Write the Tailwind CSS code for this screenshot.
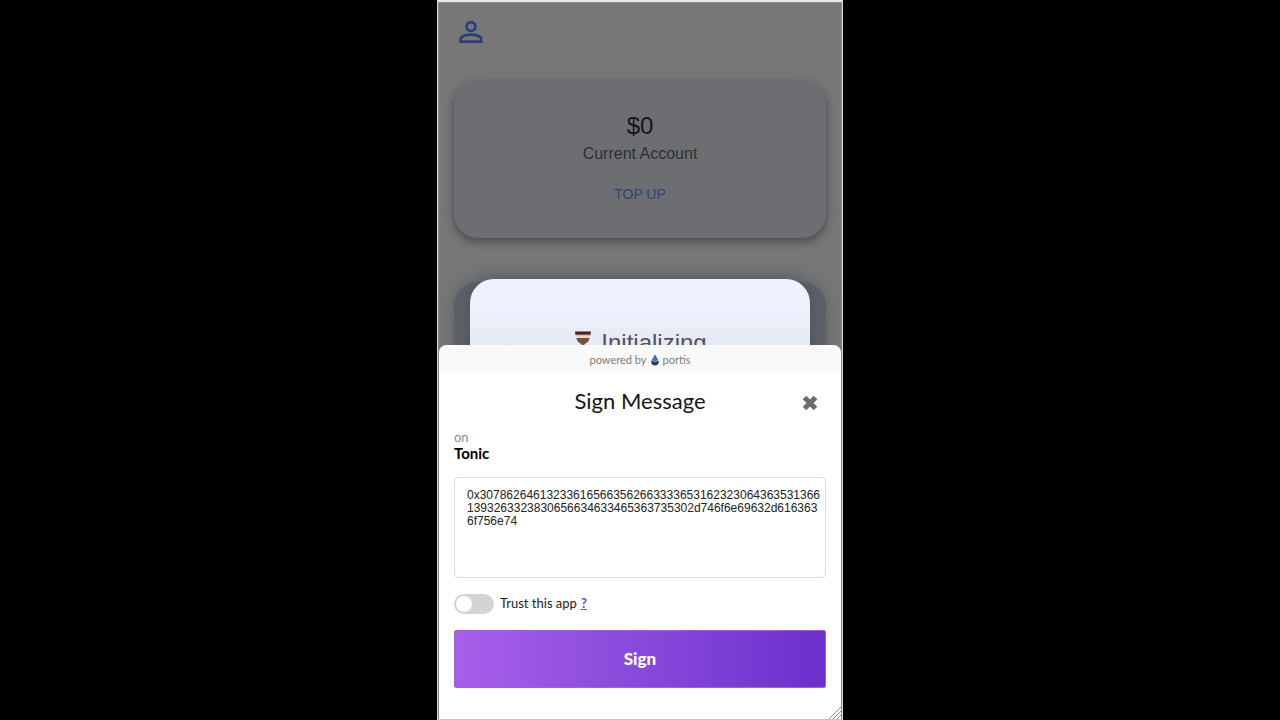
<!DOCTYPE html>
<html lang="en">
<head>
<meta charset="utf-8">
<meta name="viewport" content="width=device-width, initial-scale=1">
<title>Sign Message</title>
<script src="https://cdn.jsdelivr.net/npm/@tailwindcss/browser@4"></script>
</head>
<body class="flex min-h-screen justify-center bg-black font-['Liberation_Sans',Arial,sans-serif]">
  <div class="relative flex w-full max-w-[406px] flex-col overflow-hidden border-x border-t-2 border-b border-x-[#d8d8d8] border-t-[#e8e8e8] border-b-[#c4c4c4] bg-[#777777]">

    <!-- Wallet page -->
    <main class="flex flex-1 flex-col border border-b-0 border-[#8c8c8c] px-[15px] pt-[15px]">
      <a href="#" aria-label="Profile" class="ml-[3px] block w-7 text-[#2d3d78]">
        <svg viewBox="0 0 24 24" class="size-7" fill="none" stroke="currentColor" stroke-width="2.300">
          <circle cx="12" cy="7.300" r="3.800"/>
          <path d="M3.200 20.300v-2.100c0-2.500 4.800-3.900 8.800-3.900s8.800 1.400 8.800 3.900v2.100z"/>
        </svg>
      </a>
      <section class="mt-9 flex flex-col items-center rounded-3xl bg-[#6d6e72] pt-7 pb-7 shadow-[0_4px_8px_rgba(0,0,0,0.35),0_-2px_12px_rgba(109,110,114,0.9)]">
        <h2 class="text-2xl leading-8 text-[#171717]">$0</h2>
        <p class="text-base text-[#2e2f31]">Current Account</p>
        <button type="button" class="mt-3 h-8 text-sm text-[#30446f]">TOP UP</button>
      </section>
      <section class="mt-11 flex-1 rounded-t-3xl bg-[#5e6168] shadow-[0_0_16px_rgba(80,84,94,0.6)]"></section>
    </main>

    <!-- Loading dialog -->
    <div role="status" class="absolute inset-x-8 top-[277px] flex h-32 justify-center rounded-t-3xl bg-linear-to-b from-[#edf1fd] from-25% to-[#d8dae2] pt-12 shadow-[0_0_16px_rgba(60,66,82,0.5)]">
      <div class="flex h-8 items-center gap-2 text-2xl text-[#50525b]">
        <svg viewBox="0 0 20 24" class="h-6 w-5" aria-hidden="true">
          <path d="M2 .500h16l-.500 3h-15z" fill="#3d2522"/>
          <path d="M2.500 3h15v1.500h-15z" fill="#a0563f"/>
          <path d="M3 4.500h14v3H3z" fill="#eadbc9"/>
          <path d="M3.500 7h13c-.300 3-2 5-5 6v1.500l2.500 2.500H6l2.500-2.500V13c-3-1-4.700-3-5-6z" fill="#74503f"/>
        </svg>
        <span>Initializing</span>
      </div>
    </div>

    <!-- Signing sheet -->
    <form class="absolute inset-x-px bottom-0 flex flex-col overflow-hidden rounded-t-lg bg-white font-['Lato',sans-serif]">
      <div class="flex h-7 items-center justify-center gap-1 bg-[#f9f9f9] pt-0.5 text-[11px] text-[#808080]">
        <span>powered by</span>
        <svg viewBox="0 0 10 14" class="h-3 w-2" aria-hidden="true">
          <path d="M5 0 9 7 5 9 1 7z" fill="#36699a"/>
          <path d="M5 0v9L1 7z" fill="#4f7fa8"/>
          <path d="M.5 7.500 5 9.500 9.500 7.500c1 3.500-1 6.500-4.500 6.500S-.5 11 .5 7.500z" fill="#1c3e68"/>
        </svg>
        <span>portis</span>
      </div>
      <div class="px-[15px]">
        <header class="grid grid-cols-[32px_1fr_32px] items-end pt-3">
          <h1 class="col-start-2 text-center text-[22px] leading-8 text-[#161616]">Sign Message</h1>
          <button type="button" aria-label="Close" class="flex h-7 items-center justify-center text-[#6b6b6b]">
            <svg viewBox="0 0 16 16" class="size-4" fill="none" stroke="currentColor" stroke-width="5"><path d="M2.500 2.500l11 11M13.500 2.500l-11 11"/></svg>
          </button>
        </header>
        <p class="mt-3 text-[13px] leading-4 text-[#8c8c8c]">on</p>
        <p class="text-[15px] leading-4 font-bold text-black">Tonic</p>
        <textarea readonly aria-label="Message" class="mt-4 block h-[101px] w-full resize-none overflow-hidden rounded-sm border border-[#dedede] py-[11px] pr-px pl-3 font-['Liberation_Sans',Arial,sans-serif] text-xs leading-[13px] break-all text-[#222222] outline-none">0x3078626461323361656635626633336531623230643635313661393263323830656634633465363735302d746f6e69632d6163636f756e74</textarea>
        <div class="mt-4 flex h-5 items-center text-[13px] text-[#222222]">
          <input id="trust" type="checkbox" class="h-5 w-10 appearance-none rounded-full bg-[#d4d4d4] p-0.5 before:block before:size-4 before:rounded-full before:bg-white before:content-['']">
          <label for="trust" class="ml-1.5">Trust this app</label>
          <a href="#" aria-label="What does trusting mean?" class="ml-1 font-bold text-[#7444cf] underline">?</a>
        </div>
        <button type="submit" class="mt-4 mb-[31px] h-[58px] w-full rounded-xs border border-[#9a62dd] bg-linear-to-r from-[#a75fea] to-[#6c2fcd] text-[17px] font-black text-white">Sign</button>
      </div>
      <svg viewBox="0 0 12 12" class="absolute right-0 bottom-0 size-3" stroke="#909090" fill="none" aria-hidden="true"><path d="M0 12 12 0M4 12l8-8M8 12l4-4"/></svg>
    </form>
  </div>
</body>
</html>
